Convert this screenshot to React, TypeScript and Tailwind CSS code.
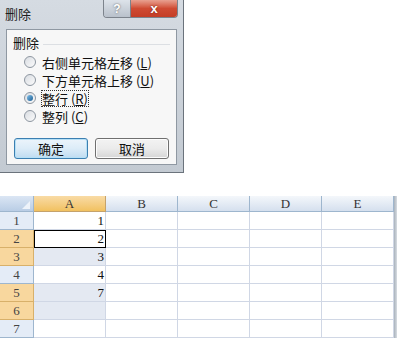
import React from 'react';

const cjk = { fontFamily: '"Noto Sans CJK SC", "Noto Sans", sans-serif' };
const serif = { fontFamily: '"Liberation Serif", "DejaVu Serif", serif' };

const options = [
  { label: '右侧单元格左移', key: 'L' },
  { label: '下方单元格上移', key: 'U' },
  { label: '整行', key: 'R', checked: true },
  { label: '整列', key: 'C' },
];

const Radio: React.FC<{ checked?: boolean }> = ({ checked }) => (
  <span className="w-[12px] h-[12px] rounded-full border border-[#8d96a0] bg-gradient-to-br from-[#d9dde2] to-[#fbfbfb] flex items-center justify-center flex-shrink-0">
    {checked && (
      <span className="w-[6px] h-[6px] rounded-full bg-gradient-to-br from-[#7fc0ea] to-[#1b5f93]" />
    )}
  </span>
);

const DeleteDialog = () => (
  <div className="w-[184px] h-[173px] bg-gradient-to-b from-[#d5dbe2] to-[#c3cad2] border-r border-b border-[#6b737c] flex flex-col">
    {/* title bar */}
    <div className="h-[29px] flex items-start justify-between pl-[5px] pr-[5px]">
      <span className="text-[13px] text-[#1e1e1e] mt-[6px] leading-[16px]" style={cjk}>删除</span>
      <div className="flex h-[18px] border border-t-0 border-[#7c838c] rounded-b-[4px] overflow-hidden">
        <div className="w-[27px] bg-gradient-to-b from-[#dde3ea] to-[#b9c1cb] flex items-center justify-center text-[12px] font-bold text-white border-r border-[#7c838c] [text-shadow:0_0_2px_#555]" style={{ fontFamily: '"Liberation Sans", sans-serif' }}>
          ?
        </div>
        <div className="w-[46px] bg-gradient-to-b from-[#e8a090] via-[#cf4a32] to-[#c43e26] flex items-center justify-center text-[13px] font-bold text-white [text-shadow:0_0_2px_#6a1a10]" style={{ fontFamily: '"Liberation Sans", sans-serif' }}>
          x
        </div>
      </div>
    </div>
    {/* client area */}
    <div className="mx-[6px] h-[136px] bg-[#f7f7f7] border border-[#8f98a2] flex flex-col px-[6px]" style={cjk}>
      <div className="flex items-center gap-[4px] mt-[5px]">
        <span className="text-[13px] leading-[16px] text-[#111]">删除</span>
        <span className="flex-1 h-px bg-[#dcdfe3] mt-[2px]" />
      </div>
      <div className="flex flex-col pl-[11px] mt-[3px] gap-[2px]">
        {options.map((o) => (
          <div key={o.key} className="flex items-center gap-[6px] h-[16px]">
            <Radio checked={o.checked} />
            <span
              className={`text-[13px] leading-[15px] text-[#111] ${
                o.checked ? 'outline outline-1 outline-dotted outline-[#333] outline-offset-0' : ''
              }`}
            >
              {o.label} (<span className="underline">{o.key}</span>)
            </span>
          </div>
        ))}
      </div>
      <div className="flex justify-between mt-[14px] px-[1px]">
        <button className="w-[74px] h-[21px] rounded-[3px] border border-[#3c7fb1] bg-gradient-to-b from-[#ecf4fb] via-[#dcecf8] to-[#bfdcf1] shadow-[inset_0_0_0_1px_#b6e0f6] text-[13px] leading-[18px] text-[#111]">
          确定
        </button>
        <button className="w-[74px] h-[21px] rounded-[3px] border border-[#707070] bg-gradient-to-b from-[#f3f3f3] via-[#ebebeb] to-[#d6d6d6] shadow-[inset_0_0_0_1px_#fcfcfc] text-[13px] leading-[18px] text-[#111]">
          取消
        </button>
      </div>
    </div>
  </div>
);

const cols = ['A', 'B', 'C', 'D', 'E'];
const values: Record<number, string> = { 1: '1', 2: '2', 3: '3', 4: '4', 5: '7' };
const selectedRows = [2, 3, 5, 6];

const Sheet = () => (
  <div className="flex" style={serif}>
    <div className="flex flex-col">
      {/* header row */}
      <div className="flex h-[16px]">
        <div className="w-[34px] border-r border-b border-[#9eb6ce] bg-gradient-to-b from-[#dbe6f4] to-[#b9cde5] flex items-end justify-end pr-[3px] pb-[2px]">
          <span className="w-0 h-0 border-l-[8px] border-l-transparent border-b-[8px] border-b-[#eef3fa]" />
        </div>
        {cols.map((c) => (
          <div
            key={c}
            className={`w-[72px] border-r border-b text-[13px] leading-[15px] text-center ${
              c === 'A'
                ? 'bg-gradient-to-b from-[#f9dba5] to-[#f1c15f] border-[#c5a26b] text-[#333]'
                : 'bg-gradient-to-b from-[#f4f7fb] to-[#d5e0ee] border-[#9eb6ce] text-[#333]'
            }`}
          >
            {c}
          </div>
        ))}
      </div>
      {[1, 2, 3, 4, 5, 6, 7].map((r) => {
        const sel = selectedRows.includes(r);
        return (
          <div key={r} className="flex h-[18px]">
            <div
              className={`w-[34px] border-r border-b text-[13px] leading-[17px] text-center text-[#444] ${
                sel ? 'bg-[#f8d79e] border-[#d8b06a]' : 'bg-[#e4ecf7] border-[#9eb6ce]'
              }`}
            >
              {r}
            </div>
            {cols.map((c) => {
              const isA = c === 'A';
              const active = isA && r === 2;
              const shaded = isA && sel && !active;
              return (
                <div
                  key={c}
                  className={`w-[72px] border-r border-b border-[#d0d7e5] text-[13px] leading-[17px] text-right pr-[1px] text-[#111] ${
                    shaded ? 'bg-[#e4e9f2]' : 'bg-white'
                  } ${active ? 'outline outline-[1.5px] outline-black -outline-offset-1 relative' : ''}`}
                >
                  {isA ? values[r] ?? '' : ''}
                </div>
              );
            })}
          </div>
        );
      })}
    </div>
    <div className="w-[3px] bg-gradient-to-r from-[#a9b2bc] to-[#d8dde2]" />
  </div>
);

export default function App() {
  return (
    <div className="w-[402px] h-[339px] bg-white overflow-hidden flex flex-col">
      <DeleteDialog />
      <div className="h-[23px]" />
      <Sheet />
    </div>
  );
}
